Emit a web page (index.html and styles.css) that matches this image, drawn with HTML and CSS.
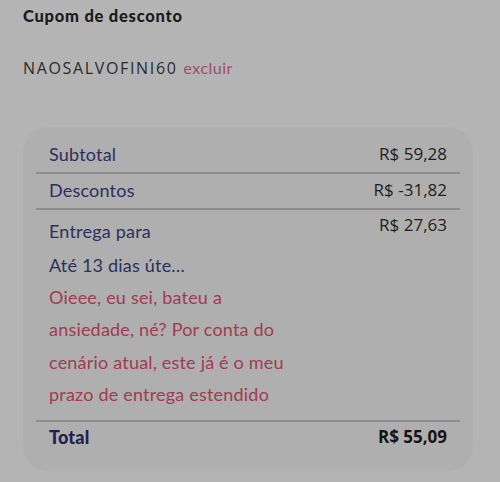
FILE: index.html
```html
<!DOCTYPE html>
<html lang="pt-BR">
<head>
<meta charset="utf-8">
<title>Cupom de desconto</title>
<link rel="stylesheet" href="styles.css">
</head>
<body>
  <h2 class="title">Cupom de desconto</h2>
  <div class="coupon">
    <span class="code">NAOSALVOFINI60</span>
    <a class="remove">excluir</a>
  </div>
  <section class="card">
    <div class="row first">
      <span class="label">Subtotal</span>
      <span class="value">R$ 59,28</span>
    </div>
    <hr class="sep">
    <div class="row second">
      <span class="label">Descontos</span>
      <span class="value">R$ -31,82</span>
    </div>
    <hr class="sep">
    <div class="row delivery">
      <div class="delivery-text">
        <div class="label">Entrega para</div>
        <div class="label">Até 13 dias úte…</div>
        <p class="note">Oieee, eu sei, bateu a<br>ansiedade, né? Por conta do<br>cenário atual, este já é o meu<br>prazo de entrega estendido</p>
      </div>
      <span class="value">R$ 27,63</span>
    </div>
    <hr class="sep">
    <div class="row total">
      <span class="label">Total</span>
      <span class="value">R$ 55,09</span>
    </div>
  </section>
</body>
</html>
```

FILE: styles.css
```css
html, body {
  margin: 0;
  padding: 0;
}
body {
  background: #b4b4b4;
  width: 500px;
  height: 482px;
  overflow: hidden;
  font-family: Lato, "Noto Sans", sans-serif;
}
.title {
  margin: 0;
  padding: 5px 0 0 23px;
  font-size: 16.5px;
  line-height: 22px;
  font-weight: 900;
  color: #1b1b1d;
  letter-spacing: 0.75px;
}
.coupon {
  margin-top: 30px;
  padding-left: 23px;
  display: flex;
  align-items: baseline;
  gap: 6px;
  line-height: 22px;
}
.code {
  font-family: "Open Sans", sans-serif;
  font-size: 16px;
  letter-spacing: 1.65px;
  color: #2a2a2c;
}
.remove {
  font-size: 16px;
  letter-spacing: 0.5px;
  color: #a04d62;
}
.card {
  margin: 48px 0 0 23px;
  width: 450px;
  box-sizing: border-box;
  background: #afafaf;
  border-radius: 26px;
  padding-bottom: 23px;
}
.row {
  display: flex;
  justify-content: space-between;
  padding: 0 26px;
  line-height: 22px;
}
.row.first {
  padding-top: 16px;
  padding-bottom: 7px;
}
.row.second {
  padding-top: 5px;
  padding-bottom: 7px;
}
.row.delivery {
  padding-top: 4px;
  padding-bottom: 10px;
  align-items: flex-start;
}
.row.total {
  padding-top: 4px;
}
.label {
  font-size: 18px;
  letter-spacing: 0.2px;
  color: #2c2f5e;
}
.value {
  font-family: "Open Sans", sans-serif;
  font-size: 17px;
  font-weight: 500;
  color: #1e1e20;
}
.sep {
  margin: 0 13px;
  border: 0;
  height: 2px;
  background: #8d8d8d;
}
.delivery-text {
  margin-top: 1px;
}
.delivery-text .label {
  line-height: 32px;
}
.delivery-text .label + .label {
  margin-top: 2px;
}
.note {
  margin: 0;
  font-size: 18px;
  letter-spacing: 0.2px;
  line-height: 32.3px;
  color: #a33a50;
}
.total .label {
  font-weight: 900;
  color: #1f2150;
}
.total .value {
  font-weight: 700;
  color: #151515;
}
```
